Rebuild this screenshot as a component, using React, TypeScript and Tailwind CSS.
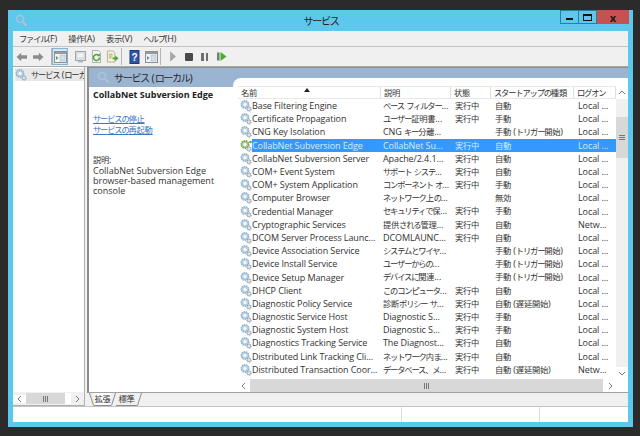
import React from 'react';

const FONT = { fontFamily: '"Open Sans", "Noto Sans CJK JP", sans-serif' };

type Row = [string, string, string, string, string];

const ROWS: Row[] = [
  ['Base Filtering Engine', 'ベース フィルター...', '実行中', '自動', 'Local ...'],
  ['Certificate Propagation', 'ユーザー証明書...', '実行中', '手動', 'Local ...'],
  ['CNG Key Isolation', 'CNG キー分離...', '', '手動 (トリガー開始)', 'Local ...'],
  ['CollabNet Subversion Edge', 'CollabNet Su...', '実行中', '自動', 'Local ...'],
  ['CollabNet Subversion Server', 'Apache/2.4.1...', '実行中', '自動', 'Local ...'],
  ['COM+ Event System', 'サポート システ...', '実行中', '自動', 'Local ...'],
  ['COM+ System Application', 'コンポーネント オ...', '実行中', '手動', 'Local ...'],
  ['Computer Browser', 'ネットワーク上の...', '', '無効', 'Local ...'],
  ['Credential Manager', 'セキュリティで保...', '実行中', '手動', 'Local ...'],
  ['Cryptographic Services', '提供される管理...', '実行中', '自動', 'Netw...'],
  ['DCOM Server Process Launc...', 'DCOMLAUNC...', '実行中', '自動', 'Local ...'],
  ['Device Association Service', 'システムとワイヤ...', '', '手動 (トリガー開始)', 'Local ...'],
  ['Device Install Service', 'ユーザーからの...', '', '手動 (トリガー開始)', 'Local ...'],
  ['Device Setup Manager', 'デバイスに関連...', '', '手動 (トリガー開始)', 'Local ...'],
  ['DHCP Client', 'このコンピュータ...', '実行中', '自動', 'Local ...'],
  ['Diagnostic Policy Service', '診断ポリシー サ...', '実行中', '自動 (遅延開始)', 'Local ...'],
  ['Diagnostic Service Host', 'Diagnostic S...', '実行中', '手動', 'Local ...'],
  ['Diagnostic System Host', 'Diagnostic S...', '実行中', '手動', 'Local ...'],
  ['Diagnostics Tracking Service', 'The Diagnost...', '実行中', '自動', 'Local ...'],
  ['Distributed Link Tracking Cli...', 'ネットワーク内ま...', '実行中', '自動', 'Local ...'],
  ['Distributed Transaction Coor...', 'データベース、メ...', '実行中', '自動 (遅延開始)', 'Netw...'],
];

// the reference font has narrow kana, so each script run gets its own size and tracking
function Tx({ children }: { children: string }) {
  const runs = children.match(/[\u3040-\u30ff\u3001]+|[\u4e00-\u9fff]+|[^\u3040-\u30ff\u3001\u4e00-\u9fff]+/g) || [];
  return (
    <span className="whitespace-nowrap">
      {runs.map((run, i) => {
        if (/[\u3040-\u30ff\u3001]/.test(run)) return <span key={i} className="text-[0.92em] tracking-[-0.14em]">{run}</span>;
        if (/[\u4e00-\u9fff]/.test(run)) return <span key={i} className="text-[0.92em] tracking-[-0.03em]">{run}</span>;
        return <span key={i} className="tracking-[-0.01em]">{run}</span>;
      })}
    </span>
  );
}

function Gears({ accent = false }: { accent?: boolean }) {
  return (
    <svg width="12" height="13" viewBox="0 0 12 13" className="shrink-0">
      <circle cx="5" cy="5.500" r="3.800" fill={accent ? '#a9c98a' : '#b7cfe2'} stroke={accent ? '#6f9f4a' : '#8fb0cb'} strokeWidth="1.300" strokeDasharray="1.500 0.800" />
      <circle cx="5" cy="5.500" r="1.700" fill="#f4f8fb" />
      <circle cx="9" cy="10" r="2.100" fill="#c7cfd6" stroke="#8e9dab" strokeWidth="1.100" strokeDasharray="1.100 0.600" />
      <circle cx="9" cy="10" r="0.800" fill="#ffffff" />
      {accent && <circle cx="10.500" cy="3" r="1.300" fill="#5fb030" />}
    </svg>
  );
}

function PaneIcon({ tint = '#5aa05a' }: { tint?: string }) {
  return (
    <svg width="13" height="12" viewBox="0 0 13 12" className="shrink-0">
      <rect x="0.5" y="0.5" width="12" height="11" fill="#f4f4f4" stroke="#8f8f8f" />
      <rect x="1" y="1" width="11" height="2" fill="#9a9a9a" />
      <rect x="6" y="4" width="5" height="6" fill="#cfe0ea" stroke="#9fb4c2" strokeWidth="0.5" />
      <path d="M2 5v4l2.5-2z" fill={tint} />
    </svg>
  );
}

function Divider() {
  return <div className="h-[17px] w-px shrink-0 bg-[#b5b5b5]" />;
}

function Toolbar() {
  return (
    <div className="flex h-[20px] shrink-0 items-center border-b border-[#a9a9a9] bg-[#f0f0f0] pl-[3px]">
      <svg width="12" height="10" viewBox="0 0 14 12" className="shrink-0">
        <path d="M0.5 6 6 1v3h7v4H6v3z" fill="#8b8b8b" />
      </svg>
      <svg width="12" height="10" viewBox="0 0 14 12" className="ml-[4px] shrink-0">
        <path d="M13.5 6 8 1v3H1v4h7v3z" fill="#8b8b8b" />
      </svg>
      <div className="w-[7px] shrink-0" />
      <Divider />
      <div className="flex h-[17px] w-[16px] shrink-0 items-center justify-center border border-[#7fb4d8] bg-[#d5e8f5]">
        <PaneIcon />
      </div>
      <div className="w-[6px] shrink-0" />
      <svg width="13" height="13" viewBox="0 0 13 13" className="shrink-0">
        <rect x="1.5" y="1.5" width="10" height="9" fill="#dfe3e6" stroke="#a5a5a5" />
        <rect x="3" y="3" width="7" height="5" fill="#eef2f5" stroke="#c0c5c8" strokeWidth="0.5" />
        <rect x="4" y="11" width="5" height="1.5" fill="#9cc0d8" />
      </svg>
      <div className="w-[3px] shrink-0" />
      <svg width="13" height="13" viewBox="0 0 13 13" className="shrink-0">
        <path d="M2.5 0.5h6l2 2v10h-8z" fill="#f7f7f2" stroke="#b0b0a8" />
        <path d="M9.5 7.5a3 3 0 1 1-1-2.2" fill="none" stroke="#3fa33f" strokeWidth="1.5" />
        <path d="M9.8 3.2v3h-3z" fill="#3fa33f" />
      </svg>
      <div className="w-[3px] shrink-0" />
      <svg width="13" height="13" viewBox="0 0 14 13" className="shrink-0">
        <path d="M1.5 0.5h6l2 2v10h-8z" fill="#f6f1da" stroke="#b3ab8a" />
        <path d="M3 4h4M3 6h4M3 8h3" stroke="#a8a080" />
        <path d="M7 7.5h3V5.5l3.500 3-3.500 3V9.500H7z" fill="#45a83c" />
      </svg>
      <div className="w-[2px] shrink-0" />
      <Divider />
      <div className="w-[7px] shrink-0" />
      <svg width="13" height="14" viewBox="0 0 13 14" className="shrink-0">
        <rect x="1" y="0.5" width="9" height="13" fill="#2f57a8" stroke="#1d3a7a" />
        <text x="5.5" y="11" textAnchor="middle" fontSize="10" fontWeight="700" fill="#fff" fontFamily="Liberation Sans">?</text>
      </svg>
      <div className="w-[3px] shrink-0" />
      <PaneIcon tint="#4d8fb8" />
      <div className="w-[2px] shrink-0" />
      <Divider />
      <div className="w-[8px] shrink-0" />
      <svg width="9" height="11" viewBox="0 0 9 11" className="shrink-0"><path d="M1.500 1v9l5-4.500z" fill="#a8a8a8" stroke="#8f8f8f" strokeWidth="0.5" /></svg>
      <div className="w-[7px] shrink-0" />
      <div className="h-[8px] w-[8px] shrink-0 rounded-[1px] bg-[#4a4a4a]" />
      <div className="w-[8px] shrink-0" />
      <div className="flex w-[7px] shrink-0 justify-between">
        <div className="h-[8px] w-[2.500px] bg-[#6f6f6f]" />
        <div className="h-[8px] w-[2.500px] bg-[#6f6f6f]" />
      </div>
      <div className="w-[9px] shrink-0" />
      <svg width="10" height="9" viewBox="0 0 10 9" className="shrink-0">
        <rect x="0" y="0.5" width="2.500" height="8" fill="#6f7f6f" />
        <path d="M3.500 0v9L9.500 4.500z" fill="#43b02a" />
      </svg>
    </div>
  );
}

function SmallGlass() {
  return (
    <svg width="13" height="13" viewBox="0 0 13 13" className="shrink-0">
      <circle cx="5" cy="5" r="3.500" fill="none" stroke="#a9c4dc" strokeWidth="1.600" />
      <path d="M8 8l3.500 3.500" stroke="#b9c4ce" strokeWidth="2" />
    </svg>
  );
}

function ScrollArrow({ dir }: { dir: 'left' | 'right' | 'up' | 'down' }) {
  const d = {
    left: 'M5 1 2 4l3 3',
    right: 'M3 1l3 3-3 3',
    up: 'M1 5l3-3 3 3',
    down: 'M1 3l3 3 3-3',
  }[dir];
  return (
    <svg width="8" height="8" viewBox="0 0 8 8">
      <path d={d} fill="none" stroke="#7a7a7a" strokeWidth="1" />
    </svg>
  );
}

function Grip({ vertical = false }: { vertical?: boolean }) {
  return (
    <div className={`flex ${vertical ? 'flex-col gap-px' : 'flex-row gap-px'}`}>
      {[0, 1, 2].map(i => (
        <div key={i} className={vertical ? 'h-px w-[6px] bg-[#777777]' : 'h-[6px] w-px bg-[#777777]'} />
      ))}
    </div>
  );
}

function ColHead({ label, width, extra }: { label: string; width: string; extra?: React.ReactNode }) {
  return (
    <div className={`${width} flex h-full shrink-0 items-center border-r border-[#e0e0e0] pl-[3px] text-[#333333]`}>
      <Tx>{label}</Tx>
      {extra}
    </div>
  );
}

function TabEdge({ back = false }: { back?: boolean }) {
  return (
    <svg width="5" height="13" viewBox="0 0 5 13" className="shrink-0">
      <path d={back ? 'M0.500 0 4.500 12.500' : 'M4.500 0 0.500 12.500'} fill="none" stroke="#8c8c8c" />
    </svg>
  );
}

export default function App() {
  return (
    <div className="h-[436px] w-[640px] overflow-hidden bg-[#2b2b2b] pl-[8px] pt-[10px] text-[9px] leading-none text-[#333333]" style={FONT}>
      <div className="flex h-[417px] w-[625px] flex-col bg-[#5cc8ec] px-[5px] pb-[5px]">
        {/* title bar */}
        <div className="flex h-[21px] shrink-0 items-start">
          <div className="pl-[2px] pt-[4px]"><SmallGlass /></div>
          <div className="flex-1 pl-[54px] pt-[5px] text-center text-[11px] text-[#222222]"><Tx>サービス</Tx></div>
          <div className="mr-[-1px] flex h-[14px] items-stretch">
            <div className="flex w-[19px] items-center justify-center border border-[#2d7f9e]">
              <div className="mt-[3px] h-[2px] w-[7px] bg-[#111111]" />
            </div>
            <div className="flex w-[18px] items-center justify-center border-y border-r border-[#2d7f9e]">
              <div className="h-[7px] w-[9px] border border-t-2 border-[#111111]" />
            </div>
            <div className="flex w-[32px] items-center justify-center bg-[#c75050] text-[11px] font-bold text-[#1a1a1a]">x</div>
          </div>
        </div>

        {/* menu */}
        <div className="flex h-[16px] shrink-0 items-center gap-[11px] border-b border-[#c4c4c4] bg-[#f0f0f0] pl-[6px] text-[#333333]">
          <Tx>ファイル(F)</Tx>
          <Tx>操作(A)</Tx>
          <Tx>表示(V)</Tx>
          <Tx>ヘルプ(H)</Tx>
        </div>

        <Toolbar />

        {/* body */}
        <div className="flex min-h-0 flex-1 bg-[#f0f0f0]">
          {/* tree */}
          <div className="flex w-[72px] shrink-0 flex-col border-b border-r border-[#b0b0b0]">
            <div className="min-h-0 flex-1 overflow-hidden bg-white pl-[2px] pt-[1px]">
              <div className="flex h-[13px] items-center gap-[4px] overflow-hidden whitespace-nowrap bg-[#e8e8e8]">
                <Gears />
                <Tx>サービス (ローカ.</Tx>
              </div>
            </div>
            <div className="flex h-[13px] shrink-0 items-center bg-[#f0f0f0]">
              <div className="flex w-[13px] items-center justify-center bg-white"><ScrollArrow dir="left" /></div>
              <div className="flex h-[11px] w-[39px] items-center justify-center bg-[#d8d8d8]"><Grip /></div>
              <div className="h-[11px] w-[6px] bg-white" />
              <div className="flex w-[12px] items-center justify-center"><ScrollArrow dir="right" /></div>
            </div>
          </div>

          {/* right side */}
          <div className="flex min-w-0 flex-1 flex-col pl-[2px]">
            <div className="flex min-h-0 flex-1 border-b border-l-2 border-t border-[#8c8c8c] border-b-[#a0a0a0]">
              <div className="flex w-[144px] shrink-0 flex-col bg-white">
                <div className="flex h-[19px] shrink-0 items-center gap-[4px] bg-[#9bb4d2] pl-[8px] text-[11px] text-[#2a2a2a]">
                  <SmallGlass />
                  <Tx>サービス (ローカル)</Tx>
                </div>
                <div className="pl-[4px] pr-[2px]">
                  <div className="mt-[3px] whitespace-nowrap font-bold text-[#222222]">CollabNet Subversion Edge</div>
                  <div className="mt-[15px] text-[#3a78c8] underline"><Tx>サービスの停止</Tx></div>
                  <div className="mt-[2px] text-[#3a78c8] underline"><Tx>サービスの再起動</Tx></div>
                  <div className="mt-[20px] h-[11px]"><Tx>説明:</Tx></div>
                  <div className="leading-[10px]">
                    CollabNet Subversion Edge<br />browser-based management<br />console
                  </div>
                </div>
              </div>
              <div className="flex min-w-0 flex-1 flex-col bg-[#9bb4d2]">
                <div className="h-[10px] shrink-0" />
                <div className="flex min-h-0 flex-1 flex-col rounded-tl-[8px] bg-white pl-[5px] pt-[8px]">
                  <div className="flex min-h-0 flex-1">
                    <div className="flex min-w-0 flex-1 flex-col">
                      <div className="flex h-[13px] shrink-0 items-center border-y border-[#e8e8e8]">
                        <ColHead
                          label="名前"
                          width="w-[143px]"
                          extra={
                            <svg width="6" height="4" viewBox="0 0 6 4" className="mb-[5px] ml-[47px]"><path d="M3 0l3 4H0z" fill="#222222" /></svg>
                          }
                        />
                        <ColHead label="説明" width="w-[70px]" />
                        <ColHead label="状態" width="w-[40px]" />
                        <ColHead label="スタートアップの種類" width="w-[83px]" />
                        <ColHead label="ログオン" width="w-[42px]" />
                      </div>
                      <div className="min-h-0 flex-1 overflow-hidden">
                        {ROWS.map((row, i) => {
                          const selected = i === 3;
                          return (
                            <div key={row[0]} className="flex h-[13.200px] items-center whitespace-nowrap">
                              <div className="flex w-[14px] shrink-0 justify-start pl-[2px]"><Gears accent={selected} /></div>
                              <div className={`flex h-full min-w-0 flex-1 items-center ${selected ? 'bg-[#3399ff] text-[#d8ebff]' : ''}`}>
                                <div className="w-[129px] shrink-0"><Tx>{row[0]}</Tx></div>
                                <div className="w-[71px] shrink-0 pl-[2px]"><Tx>{row[1]}</Tx></div>
                                <div className="w-[40px] shrink-0 pl-[3px]"><Tx>{row[2]}</Tx></div>
                                <div className="w-[83px] shrink-0 pl-[3px]"><Tx>{row[3]}</Tx></div>
                                <div className="shrink-0 pl-[3px]"><Tx>{row[4]}</Tx></div>
                              </div>
                            </div>
                          );
                        })}
                      </div>
                    </div>
                    <div className="flex w-[12px] shrink-0 flex-col bg-[#f0f0f0]">
                      <div className="flex h-[13px] items-center justify-center bg-white"><ScrollArrow dir="up" /></div>
                      <div className="h-[18px]" />
                      <div className="flex h-[41px] items-center justify-center bg-[#d8d8d8]"><Grip vertical /></div>
                      <div className="flex-1" />
                      <div className="flex h-[12px] items-center justify-center bg-white"><ScrollArrow dir="down" /></div>
                    </div>
                  </div>
                  <div className="flex h-[13px] shrink-0 items-center pr-[12px]">
                    <div className="flex h-full w-[12px] items-center justify-center bg-white"><ScrollArrow dir="left" /></div>
                    <div className="flex h-full flex-1 items-center justify-center bg-[#d8d8d8]"><Grip /></div>
                    <div className="flex h-full w-[13px] items-center justify-center bg-white"><ScrollArrow dir="right" /></div>
                  </div>
                </div>
              </div>
            </div>

            {/* tabs */}
            <div className="flex h-[13px] shrink-0 items-stretch pl-[2px] text-[#333333]">
              <TabEdge back />
              <div className="flex w-[17px] items-center justify-center border-b border-[#8c8c8c] bg-white"><Tx>拡張</Tx></div>
              <TabEdge />
              <div className="flex w-[21px] items-center justify-center border-b border-[#8c8c8c]"><Tx>標準</Tx></div>
              <TabEdge />
            </div>
          </div>
        </div>

        {/* status bar */}
        <div className="flex h-[16px] shrink-0 border-t border-[#c4c4c4] bg-white">
          <div className="w-[389px] border-r border-[#dcdcdc]" />
          <div className="w-[138px] border-r border-[#dcdcdc]" />
          <div className="flex-1" />
        </div>
      </div>
    </div>
  );
}
